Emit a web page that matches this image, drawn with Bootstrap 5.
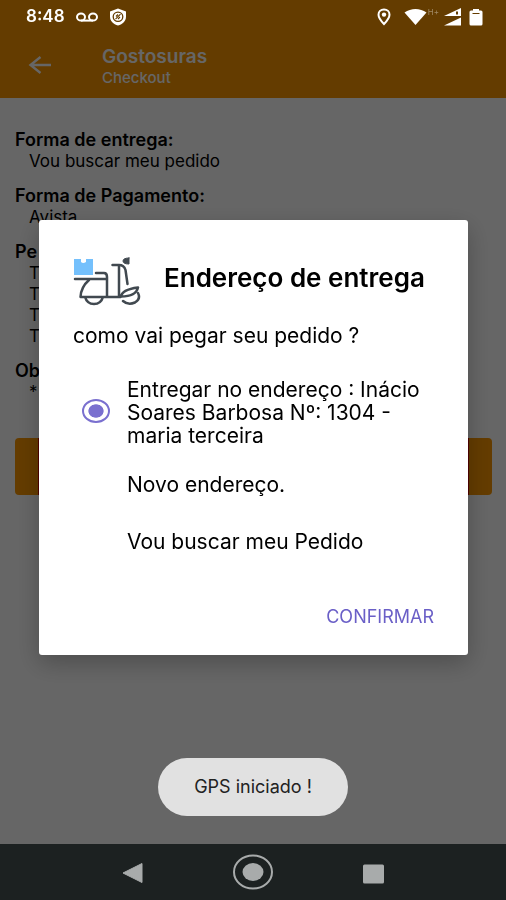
<!DOCTYPE html>
<html lang="pt-BR">
<head>
<meta charset="utf-8">
<meta name="viewport" content="width=device-width, initial-scale=1">
<title>Gostosuras - Checkout</title>
<link rel="stylesheet" href="https://cdn.jsdelivr.net/npm/bootstrap@5.3.0/dist/css/bootstrap.min.css">
<style>
  body { font-family: Inter, Roboto, sans-serif; color: #000; background: #fff; }
  .statusbar { height: 33px; padding: 0 23px 0 26px; z-index: 3; color: #fff; }
  .clock { font-size: 17px; line-height: 33px; font-weight: 600; }
  .net-type { font-size: 8px; line-height: 10px; color: #a08a66; }
  .appbar { background: #fa9600; padding-top: 34px; height: 98px; }
  .appbar .back { width: 80px; color: #fff; padding-bottom: 4px !important; }
  .app-name { font-size: 19px; line-height: 23px; font-weight: 600; }
  .app-page { font-size: 15px; line-height: 20px; font-weight: 500; }
  .bar-titles { color: #fff; padding-left: 22px; }
  .order { padding: 31px 14px 0 15px; font-size: 17px; line-height: 21px; }
  .order dt { font-size: 18px; font-weight: 600; line-height: 22px; }
  .order dd { margin: 0 0 13px 14px; }
  .send { height: 57px; padding: 0 23px; background: #fa9600; border-radius: 4px; margin-top: 35px; }
  .send span { background: #c80000; }
  .scrim { background: rgba(0, 0, 0, .6); padding: 31px 38px 56px 39px; z-index: 2; }
  .dialog-box { border-radius: 3px; padding: 33px 34px 26px; box-shadow: 0 8px 24px rgba(0, 0, 0, .25); }
  .dialog-title { font-size: 26px; line-height: 30px; font-weight: 600; padding: 0 0 10px 23px; }
  .question { font-size: 21px; line-height: 24px; margin: 11px 0 30px; }
  .choice { font-size: 21px; line-height: 23px; }
  .choice + .choice { min-height: 57px; }
  .choice-first { margin-bottom: 9px; }
  .choice input { appearance: none; width: 28px; height: 24px; margin: 0 17px 3px 9px; border: 2px solid #7a70cf; border-radius: 50%;
    background: radial-gradient(ellipse 8px 7px, #7a70cf 90%, #fff 100%); }
  .choice input:not(:checked) { opacity: 0; }
  .confirm { color: #6a5fc7; font-size: 18px; line-height: 24px; margin-top: 35px; }
  .gps-toast { z-index: 3; bottom: 84px; }
  .gps-toast div { background: #e1e1e1; border-radius: 29px; padding: 18px 36px; font-size: 18px; line-height: 22px; color: #222; }
  .navkeys { height: 56px; background: #1c2121; z-index: 3; gap: 85px; }
</style>
<script src="https://cdn.jsdelivr.net/npm/bootstrap@5.3.0/dist/js/bootstrap.bundle.min.js"></script>
</head>
<body class="min-vh-100 position-relative">

<div class="statusbar fixed-top d-flex align-items-center justify-content-between">
  <div class="d-flex align-items-center">
    <span class="clock">8:48</span>
    <svg class="ms-2" width="30" height="20" viewBox="0 0 30 20" fill="none" stroke="#fff" stroke-width="2"><ellipse cx="8" cy="10" rx="4" ry="3.6"/><ellipse cx="20" cy="10" rx="4" ry="3.6"/><path d="M8 13.6h12"/></svg>
    <svg class="ms-1" width="22" height="18" viewBox="0 0 22 18"><path fill="#fff" d="M11 .5l8 3v5c0 4.600-3.300 7.600-8 9-4.700-1.400-8-4.400-8-9v-5z"/><ellipse cx="11" cy="8.700" rx="4.800" ry="4.600" fill="none" stroke="#643c00" stroke-width="1.300"/><path d="M8.500 11.200l5-5M9 8.500l2-2M11 11l2-2" stroke="#643c00" stroke-width="1.100"/></svg>
  </div>
  <div class="d-flex align-items-center">
    <svg width="14" height="18" viewBox="0 0 14 18"><path d="M7 1.500c3.300 0 5.500 2.300 5.500 5.200C12.500 10.300 7 16 7 16S1.500 10.300 1.500 6.700C1.500 3.800 3.700 1.500 7 1.500z" fill="none" stroke="#fff" stroke-width="2"/><circle cx="7" cy="6.600" r="2.200" fill="#fff"/></svg>
    <svg width="37" height="18" viewBox="-13 0 37 18"><path fill="#fff" d="M.5 4.500C7-.2 16-.2 22.500 4.500L11.500 17z"/></svg>
    <span class="net-type align-self-start">H+</span>
    <svg class="ms-1" width="18" height="19" viewBox="0 0 18 19"><path fill="#fff" d="M1 9L18 1v8zM1 18.500L18 10.500v8z"/><path d="M14 4.500v3" stroke="#643c00" stroke-width="2"/></svg>
    <svg class="ms-2" width="14" height="18" viewBox="0 0 14 18"><path fill="#fff" d="M4 1h6v1.500h2q1.500 0 1.500 1.500v12q0 1.500-1.500 1.500H2Q.5 17.500.5 16V4Q.5 2.500 2 2.500h2z"/><path d="M3.500 5.500h7" stroke="#643c00"/></svg>
  </div>
</div>

<header class="appbar d-flex align-items-center">
  <button type="button" class="back btn p-0 border-0 flex-shrink-0" aria-label="Voltar">
    <svg width="24" height="22" viewBox="0 0 24 22" fill="none" stroke="currentColor" stroke-width="2.400"><path d="M23 11H3M12.500 3L2.500 11l10 8"/></svg>
  </button>
  <div class="bar-titles">
    <div class="app-name">Gostosuras</div>
    <div class="app-page">Checkout</div>
  </div>
</header>

<main class="order">
  <dl class="mb-0">
    <dt>Forma de entrega:</dt><dd>Vou buscar meu pedido</dd>
    <dt>Forma de Pagamento:</dt><dd>Avista</dd>
    <dt>Pe</dt><dd>T<br>T<br>T<br>T</dd>
    <dt>Ob</dt><dd>*</dd>
  </dl>
  <button type="button" class="send btn border-0 w-100 d-flex align-items-stretch" aria-label="Enviar"><span class="w-100"></span></button>
</main>

<div class="scrim position-fixed top-0 start-0 w-100 h-100 d-flex align-items-center">
  <form class="dialog-box bg-white w-100" role="dialog" aria-labelledby="dialogTitle">
    <div class="d-flex align-items-center">
      <svg class="flex-shrink-0" width="68" height="60" viewBox="0 0 68 60" fill="none" stroke="#414950" stroke-width="2.500" stroke-linecap="round" stroke-linejoin="round">
        <path d="M1 6h7v3q2 2 5 0V6h7v16H1z" fill="#74c0fc" stroke="none"/>
        <path d="M2 26h32M23 20h8q3 0 3 4v19.500M16 27Q8 34 7.500 44h40M39.500 12H46v31.500M46 12q5 0 6.500 5l2 14M12 44q2 7 9 7t9-7M48 43.500q1-7 17-9-2 9-17 9zM65 40q3 6-3 9.500-7 3-12-1.500"/>
        <path d="M56 5v6q-6 0-6-3T56 5z" fill="#414950" stroke-width="1"/>
      </svg>
      <h1 id="dialogTitle" class="dialog-title mb-0 text-nowrap">Endereço de entrega</h1>
    </div>
    <p class="question">como vai pegar seu pedido ?</p>
    <div class="choice choice-first d-flex align-items-center">
      <input class="flex-shrink-0" type="radio" name="entrega" id="op1" checked>
      <label for="op1">Entregar no endereço : Inácio Soares Barbosa Nº: 1304 - maria terceira</label>
    </div>
    <div class="choice d-flex align-items-center">
      <input class="flex-shrink-0" type="radio" name="entrega" id="op2">
      <label for="op2">Novo endereço.</label>
    </div>
    <div class="choice d-flex align-items-center">
      <input class="flex-shrink-0" type="radio" name="entrega" id="op3">
      <label for="op3">Vou buscar meu Pedido</label>
    </div>
    <div class="text-end"><button type="button" class="confirm btn border-0 p-0">CONFIRMAR</button></div>
  </form>
</div>

<div class="gps-toast position-fixed start-0 w-100 d-flex justify-content-center"><div role="status">GPS iniciado !</div></div>

<nav class="navkeys fixed-bottom d-flex align-items-center justify-content-center">
  <button type="button" class="btn border-0 p-0" aria-label="Voltar"><svg width="34" height="22" viewBox="0 0 34 22"><path d="M9 11L28 1.500v19z" fill="#a8abab" stroke="#a8abab" stroke-linejoin="round"/></svg></button>
  <button type="button" class="btn border-0 p-0" aria-label="Início"><svg width="40" height="36" viewBox="0 0 40 36"><ellipse cx="20" cy="18" rx="19" ry="16.500" fill="none" stroke="#a8abab" stroke-width="2"/><ellipse cx="20" cy="18" rx="10.500" ry="9" fill="#a8abab"/></svg></button>
  <button type="button" class="btn border-0 p-0" aria-label="Recentes"><svg width="34" height="20" viewBox="0 0 34 20"><rect x="5" y=".5" width="21" height="19" rx="1.500" fill="#a8abab"/></svg></button>
</nav>
</body>
</html>
